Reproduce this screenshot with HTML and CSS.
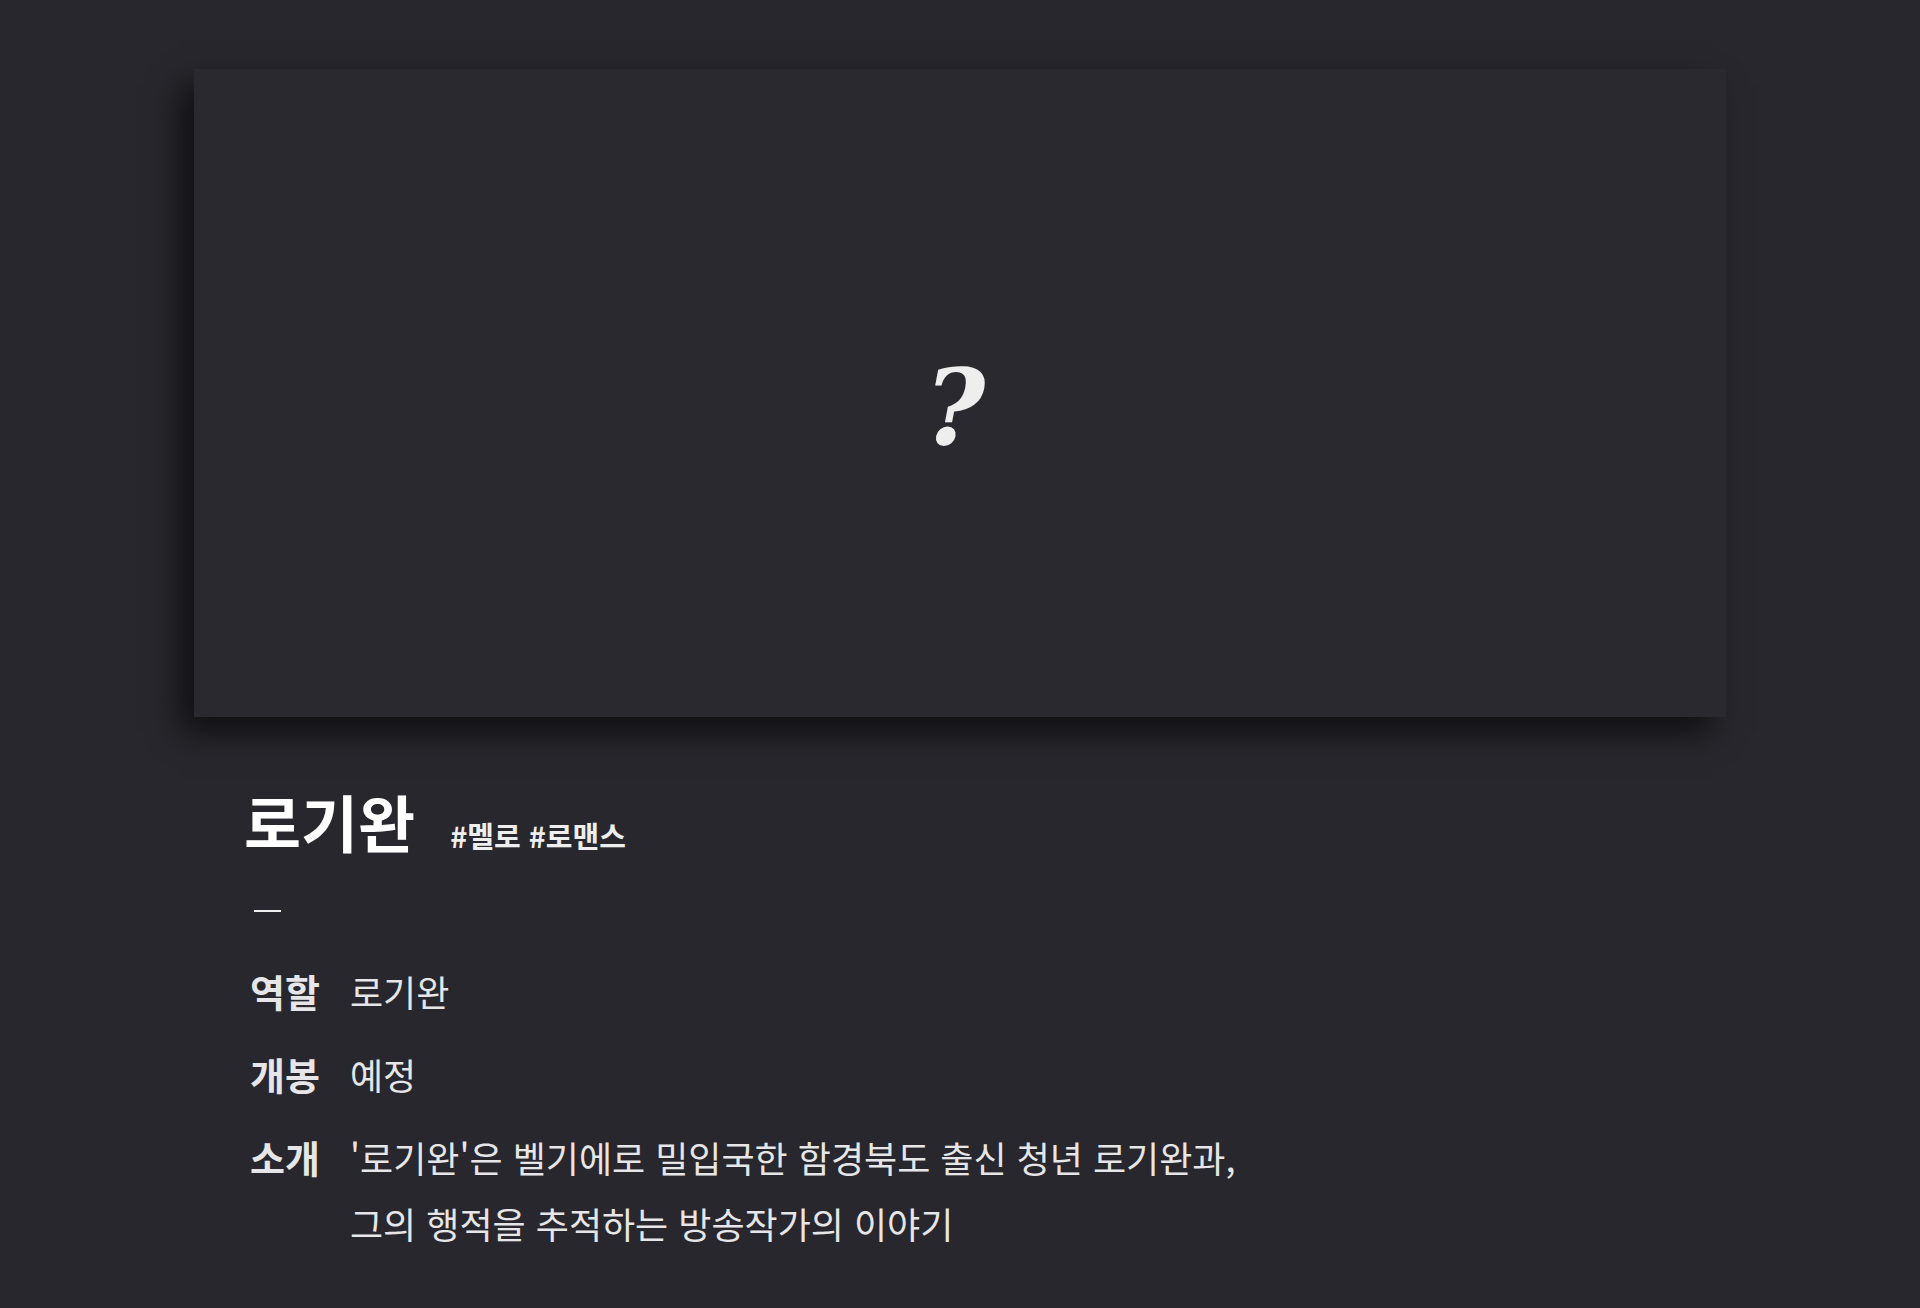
FILE: index.html
```html
<!DOCTYPE html>
<html lang="ko">

<head>
	<meta charset="UTF-8">
	<meta name="viewport" content="width=device-width, initial-scale=1.0">
	<title>로기완</title>
	<link rel="stylesheet" href="styles.css">
</head>

<body>
	<div class="wrapper">
		<div class="movie__poster">
			<span class="movie__mark">?</span>
		</div>
		<div class="movie__info">
			<div class="movie__head">
				<h1 class="movie__title">로기완</h1>
				<span class="movie__tags">#멜로 #로맨스</span>
			</div>
			<div class="movie__bar"></div>
			<div class="movie__row">
				<span class="movie__label">역할</span>
				<p class="movie__value">로기완</p>
			</div>
			<div class="movie__row">
				<span class="movie__label">개봉</span>
				<p class="movie__value">예정</p>
			</div>
			<div class="movie__row">
				<span class="movie__label">소개</span>
				<p class="movie__value">'로기완'은 벨기에로 밀입국한 함경북도 출신 청년 로기완과,<br>그의 행적을 추적하는 방송작가의 이야기</p>
			</div>
		</div>
	</div>
</body>

</html>
```

FILE: styles.css
```css
body {
	margin: 0;
	background: #28272d;
	color: #e6e6e8;
	font-family: "Noto Sans CJK KR", "Noto Sans", sans-serif;
}

.wrapper {
	width: 1532px;
	margin: 0 auto;
	padding: 69px 0 40px;
}

.movie__poster {
	height: 648px;
	display: flex;
	justify-content: center;
	align-items: center;
	background: #2a292f;
	box-shadow: -14px 16px 30px rgba(0, 0, 0, 0.6);
}

.movie__mark {
	margin: 30px 10px 0 0;
	font-family: "DejaVu Serif", serif;
	font-style: italic;
	font-weight: 700;
	font-size: 104px;
	color: #eeeeee;
}

.movie__info {
	padding-left: 50px;
}

.movie__head {
	display: flex;
	align-items: baseline;
	margin-top: 59px;
}

.movie__title {
	margin: 0;
	font-size: 62px;
	font-weight: 700;
	color: #ffffff;
}

.movie__tags {
	margin-left: 35px;
	font-size: 29px;
	font-weight: 700;
	color: #eeeeee;
}

.movie__bar {
	width: 27px;
	height: 2px;
	margin: 44px 0 46px 10px;
	background: #eeeeee;
}

.movie__row {
	display: flex;
	align-items: baseline;
	margin-bottom: 17px;
	padding-left: 6px;
	font-size: 36px;
	line-height: 66px;
}

.movie__label {
	width: 76px;
	margin-right: 24px;
	flex-shrink: 0;
	font-size: 38px;
	font-weight: 700;
}

.movie__value {
	margin: 0;
}
```
